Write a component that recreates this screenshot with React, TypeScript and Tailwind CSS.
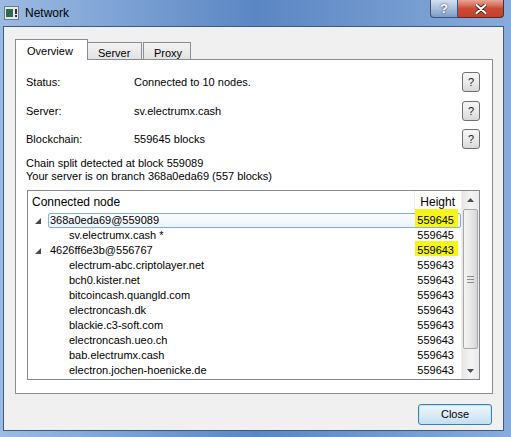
import React from "react"

interface NodeRow {
  name: string
  height: string
  level: 0 | 1
  selected?: boolean
  marked?: "top" | "mid"
}

const rows: NodeRow[] = [
  { name: "368a0eda69@559089", height: "559645", level: 0, selected: true, marked: "top" },
  { name: "sv.electrumx.cash *", height: "559645", level: 1 },
  { name: "4626ff6e3b@556767", height: "559643", level: 0, marked: "mid" },
  { name: "electrum-abc.criptolayer.net", height: "559643", level: 1 },
  { name: "bch0.kister.net", height: "559643", level: 1 },
  { name: "bitcoincash.quangld.com", height: "559643", level: 1 },
  { name: "electroncash.dk", height: "559643", level: 1 },
  { name: "blackie.c3-soft.com", height: "559643", level: 1 },
  { name: "electroncash.ueo.ch", height: "559643", level: 1 },
  { name: "bab.electrumx.cash", height: "559643", level: 1 },
  { name: "electron.jochen-hoenicke.de", height: "559643", level: 1 },
]

const HelpButton = () => (
  <button className="ml-auto w-[18px] h-[20px] border border-[#707070] rounded-[3px] bg-gradient-to-b from-[#f6f6f6] via-[#ebebeb] to-[#d8d8d8] text-[11px] leading-none text-[#222] flex items-center justify-center">
    ?
  </button>
)

const InfoRow = ({ label, value, className }: { label: string; value: string; className?: string }) => (
  <div className={`flex items-center h-[20px] ${className ?? ""}`}>
    <span className="w-[108px]">{label}</span>
    <span>{value}</span>
    <HelpButton />
  </div>
)

const Arrow = ({ up }: { up?: boolean }) => (
  <svg width="7" height="4" viewBox="0 0 7 4">
    <polygon points={up ? "3.5,0 7,4 0,4" : "0,0 7,0 3.5,4"} fill="#4d4d4d" />
  </svg>
)

const App: React.FC = () => {
  return (
    <div className="w-[511px] h-[437px] flex flex-col overflow-hidden bg-gradient-to-r from-[#9cbbe2] via-[#5a86c3] to-[#88abda] font-['Liberation_Sans',Arial,sans-serif] text-[11px] text-black">
      {/* title bar */}
      <div className="h-[26px] flex items-start shrink-0">
        <svg className="ml-[4px] mt-[6px]" width="15" height="14" viewBox="0 0 15 14">
          <rect x="0.5" y="0.5" width="14" height="13" fill="#e4e8ec" stroke="#6f7b88" />
          <rect x="2" y="3" width="7" height="8" fill="#2e6a50" />
          <rect x="11" y="3" width="2" height="5" fill="#333" />
          <rect x="11" y="9" width="2" height="2" fill="#333" />
        </svg>
        <span className="ml-[6px] mt-[6px] text-[12px] leading-[14px]">Network</span>
        <div className="ml-auto mr-[7px] flex">
          <div className="w-[28px] h-[18px] border border-t-0 border-[#3b5479] rounded-bl-[4px] bg-gradient-to-b from-[#d3e0f0] via-[#a9bfdc] to-[#7d9bc6] flex items-center justify-center text-white font-bold text-[13px] [text-shadow:0_0_2px_#223]">
            ?
          </div>
          <div className="w-[46px] h-[18px] border border-t-0 border-l-0 border-[#5a2a24] rounded-br-[4px] bg-gradient-to-b from-[#e8a698] via-[#cb4a36] to-[#c2402b] flex items-center justify-center">
            <svg width="12" height="10" viewBox="0 0 12 10">
              <path d="M1.5 1 L10.5 9 M10.5 1 L1.5 9" stroke="#3a1a16" strokeWidth="3.6" strokeLinecap="round" />
              <path d="M1.5 1 L10.5 9 M10.5 1 L1.5 9" stroke="#ffffff" strokeWidth="2.2" strokeLinecap="round" />
            </svg>
          </div>
        </div>
      </div>

      {/* dialog body */}
      <div className="ml-[3px] mr-[7px] mb-[6px] h-[405px] border border-[#3b5a86] bg-[#f0f0f0] flex flex-col">
        {/* tabs */}
        <div className="mt-[12px] ml-[11px] h-[21px] flex items-end">
          <div className="relative z-10 w-[73px] h-[21px] bg-white border border-b-0 border-[#898c95] pl-[11px] pt-[3px]">Overview</div>
          <div className="w-[55px] h-[18px] -ml-px bg-gradient-to-b from-[#f3f3f3] to-[#e2e2e2] border border-[#898c95] pl-[10px] pt-[2px]">Server</div>
          <div className="w-[48px] h-[18px] ml-px bg-gradient-to-b from-[#f3f3f3] to-[#e2e2e2] border border-[#898c95] pl-[10px] pt-[2px]">Proxy</div>
        </div>

        {/* tab pane */}
        <div className="-mt-px ml-[11px] mr-[10px] h-[335px] border border-[#898c95] bg-white pt-[12px] pl-[10px] pr-[12px] flex flex-col">
          <InfoRow label="Status:" value="Connected to 10 nodes." />
          <InfoRow label="Server:" value="sv.electrumx.cash" className="mt-[9px]" />
          <InfoRow label="Blockchain:" value="559645 blocks" className="mt-[8px]" />
          <div className="mt-[8px] leading-[13px]">
            <div>Chain split detected at block 559089</div>
            <div>Your server is on branch 368a0eda69 (557 blocks)</div>
          </div>

          {/* node tree */}
          <div className="mt-[7px] ml-[1px] h-[190px] border border-[#828790] bg-white flex">
            <div className="flex-1 flex flex-col">
              <div className="relative z-10 h-[22px] flex text-[12px]">
                <div className="flex-1 pl-[4px] flex items-center">Connected node</div>
                <div className="w-[47px] border-l border-[#ececec] flex items-center justify-end pr-[6px]">Height</div>
              </div>
              {rows.map((r, i) => (
                <div key={i} className="h-[15px] flex">
                  <div className="w-[20px] flex items-center">
                    {r.level === 0 && (
                      <svg className="ml-[7px]" width="6" height="6" viewBox="0 0 6 6">
                        <polygon points="6,0 6,6 0,6" fill="#4a4a4a" />
                      </svg>
                    )}
                  </div>
                  <div
                    className={`flex-1 flex items-center border rounded-[2px] ${
                      r.selected ? "border-[#84acdd] bg-gradient-to-b from-[#fbfcfe] to-[#edf3fc]" : "border-transparent"
                    }`}
                  >
                    <span className={`flex-1 ${r.level === 1 ? "pl-[20px]" : "pl-[1px]"}`}>{r.name}</span>
                    <span className="relative w-[46px] h-full flex items-center justify-end pr-[6px]">
                      {r.marked && (
                        <span
                          className={`absolute left-[1px] right-[2px] bg-[#f5f51c] ${
                            r.marked === "top" ? "-top-[5px] bottom-[0px]" : "-top-[3px] bottom-[1px]"
                          }`}
                        />
                      )}
                      <span className="relative z-20">{r.height}</span>
                    </span>
                  </div>
                </div>
              ))}
            </div>

            {/* scrollbar */}
            <div className="w-[18px] flex flex-col bg-gradient-to-r from-[#e6e6e6] via-[#f4f4f4] to-[#eaeaea] border-l border-[#f0f0f0]">
              <div className="h-[17px] flex items-center justify-center">
                <Arrow up />
              </div>
              <div className="mt-[1px] mx-[1px] h-[140px] border border-[#a8a8a8] rounded-[2px] bg-gradient-to-r from-[#f5f5f5] via-[#e9e9e9] to-[#d6d6d6] flex flex-col items-center justify-center gap-[2px]">
                <div className="w-[7px] h-px bg-[#8c8c8c]" />
                <div className="w-[7px] h-px bg-[#8c8c8c]" />
                <div className="w-[7px] h-px bg-[#8c8c8c]" />
              </div>
              <div className="flex-1" />
              <div className="h-[17px] flex items-center justify-center">
                <Arrow />
              </div>
            </div>
          </div>
        </div>

        {/* footer */}
        <div className="mt-[10px] mr-[11px] self-end">
          <button className="w-[74px] h-[21px] border border-[#3c7fb1] rounded-[3px] bg-gradient-to-b from-[#eef6fc] via-[#dcecf9] to-[#c4dff3] shadow-[inset_0_0_0_1px_#bfe4f9] text-[11px]">
            Close
          </button>
        </div>
      </div>
    </div>
  )
}

export default App
